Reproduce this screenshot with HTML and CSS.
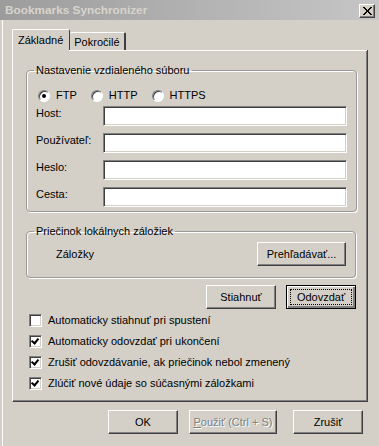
FILE: index.html
```html
<!DOCTYPE html>
<html lang="sk">
<head>
    <meta charset="UTF-8">
    <title>Bookmarks Synchronizer</title>
    <link rel="stylesheet" href="styles.css">
</head>
<body>
    <div class="window">
        <div class="titlebar">
            <span class="title">Bookmarks Synchronizer</span>
            <span class="close">
                <svg width="9" height="8" viewBox="0 0 9 8"><path d="M0 0h2v1h1v1h1v1h1v-1h1v-1h1v-1h2v1h-1v1h-1v1h-1v2h1v1h1v1h1v1h-2v-1h-1v-1h-1v-1h-1v1h-1v1h-1v1h-2v-1h1v-1h1v-1h1v-2h-1v-1h-1v-1h-1z" fill="#000"/></svg>
            </span>
        </div>
        <div class="content">
            <ul class="tabs">
                <li class="current">Základné</li>
                <li>Pokročilé</li>
            </ul>
            <div class="panel">
                <fieldset class="group remote">
                    <legend>Nastavenie vzdialeného súboru</legend>
                    <div class="radios">
                        <label><span class="radio checked"></span>FTP</label>
                        <label><span class="radio"></span>HTTP</label>
                        <label><span class="radio"></span>HTTPS</label>
                    </div>
                    <div class="row"><span class="lbl">Host:</span><span class="field"></span></div>
                    <div class="row"><span class="lbl">Používateľ:</span><span class="field"></span></div>
                    <div class="row"><span class="lbl">Heslo:</span><span class="field"></span></div>
                    <div class="row"><span class="lbl">Cesta:</span><span class="field"></span></div>
                </fieldset>
                <fieldset class="group local">
                    <legend>Priečinok lokálnych záložiek</legend>
                    <div class="local-row">
                        <span class="folder">Záložky</span>
                        <span class="btn browse">Prehľadávať...</span>
                    </div>
                </fieldset>
                <div class="actions">
                    <span class="btn">Stiahnuť</span>
                    <span class="btn focus"><span>Odovzdať</span></span>
                </div>
                <ul class="checks">
                    <li><span class="box"></span>Automaticky stiahnuť pri spustení</li>
                    <li><span class="box checked"></span>Automaticky odovzdať pri ukončení</li>
                    <li><span class="box checked"></span>Zrušiť odovzdávanie, ak priečinok nebol zmenený</li>
                    <li><span class="box checked"></span>Zlúčiť nové údaje so súčasnými záložkami</li>
                </ul>
            </div>
            <div class="footer">
                <span class="btn wide">OK</span>
                <span class="btn wide apply disabled"><span><u>P</u>oužiť (Ctrl + S)</span></span>
                <span class="btn wide">Zrušiť</span>
            </div>
        </div>
    </div>
</body>
</html>
```

FILE: styles.css
```css
body,ul,li,fieldset,legend{
    padding:0;
    margin:0;
}
body{
    font:11px/13px "Liberation Sans", Arial, sans-serif;
    color:#000;
    background-color:#d4d0c8;
}
ul{
    list-style:none;
}
.window{
    width:379px;
    height:446px;
    background-color:#d4d0c8;
    box-sizing:border-box;
    border-left:1px solid #d4d0c8;
    position:relative;
}
.window:before{
    content:"";
    position:absolute;
    left:1px;
    top:20px;
    bottom:0;
    border-left:1px solid #fff;
}
.titlebar{
    height:20px;
    margin-left:-1px;
    background:linear-gradient(to right,#9c9c9c,#c6c6c6);
    display:flex;
    align-items:center;
    justify-content:space-between;
    padding:0 4px 0 5px;
}
.title{
    font-weight:bold;
    font-size:11.8px;
    color:#d8d4cc;
}
.close{
    width:16px;
    height:14px;
    box-sizing:border-box;
    background-color:#d4d0c8;
    border-top:1px solid #fff;
    border-left:1px solid #fff;
    border-right:1px solid #404040;
    border-bottom:1px solid #404040;
    box-shadow:inset -1px -1px 0 #808080;
    display:flex;
    align-items:center;
    justify-content:center;
    margin-top:2px;
}
.content{
    padding:9px 0 0 11px;
}
.tabs{
    display:flex;
    align-items:flex-end;
    height:21px;
}
.tabs li{
    height:18px;
    line-height:18px;
    padding:0 4px 0 4px;
    border-top:1px solid #fff;
    border-left:1px solid #fff;
    border-right:2px solid #404040;
    border-radius:2px 2px 0 0;
    box-sizing:border-box;
}
.tabs li.current{
    height:21px;
    line-height:20px;
    padding:0 6px 0 5px;
    border-right:1px solid #404040;
}
.tabs li + li{
    border-left:none;
}
.panel{
    width:356px;
    height:352px;
    box-sizing:border-box;
    border-left:1px solid #fff;
    border-right:1px solid #404040;
    border-bottom:1px solid #404040;
    box-shadow:inset -1px -1px 0 #808080;
    padding:14px 0 0 13px;
    position:relative;
}
.panel:before{
    content:"";
    position:absolute;
    top:0;
    left:56px;
    right:0;
    border-top:1px solid #fff;
}
.group{
    width:330px;
    box-sizing:border-box;
    border:1px solid #9a9a9a;
    border-radius:4px;
    box-shadow:1px 1px 0 #fff, inset 1px 1px 0 #fff;
    padding:0 9px 0 9px;
}
.group legend{
    padding:0 2px;
    margin-left:-2px;
}
.radios{
    display:flex;
    margin:11px 0 3px 2px;
    height:15px;
    align-items:center;
}
.radios label{
    display:flex;
    align-items:center;
    margin-right:14px;
}
.radio{
    width:12px;
    height:12px;
    border-radius:50%;
    box-sizing:border-box;
    background-color:#fff;
    border:1px solid;
    border-color:#808080 #fff #fff #808080;
    box-shadow:inset 1px 1px 0 #404040;
    margin-right:6px;
    position:relative;
}
.radio.checked:after{
    content:"";
    position:absolute;
    left:3px;
    top:3px;
    width:4px;
    height:4px;
    border-radius:50%;
    background-color:#000;
}
.row{
    display:flex;
    align-items:flex-start;
    height:20px;
    margin-bottom:7px;
}
.lbl{
    width:67px;
    padding-top:1px;
}
.field{
    width:244px;
    height:20px;
    box-sizing:border-box;
    background-color:#fff;
    border:1px solid;
    border-color:#808080 #fff #fff #808080;
    box-shadow:inset 1px 1px 0 #404040, inset -1px -1px 0 #d4d0c8;
}
.remote{
    height:148px;
}
.local{
    margin-top:13px;
    height:53px;
}
.local-row{
    display:flex;
    justify-content:space-between;
    align-items:center;
    padding:4px 0 0 20px;
}
.btn{
    display:inline-flex;
    align-items:center;
    justify-content:center;
    height:24px;
    box-sizing:border-box;
    background-color:#d4d0c8;
    border:1px solid;
    border-color:#fff #404040 #404040 #fff;
    box-shadow:inset -1px -1px 0 #808080;
    padding:0 6px;
    white-space:nowrap;
}
.browse{
    width:89px;
}
.actions{
    display:flex;
    justify-content:flex-end;
    gap:10px;
    width:330px;
    margin-top:7px;
}
.actions .btn{
    width:70px;
}
.btn.focus{
    border-color:#000;
    box-shadow:inset 1px 1px 0 #fff, inset -2px -2px 0 #808080;
    padding:3px;
}
.btn.focus span{
    flex:1;
    align-self:stretch;
    display:flex;
    align-items:center;
    justify-content:center;
    border:1px dotted #000;
}
.checks{
    margin:1px 0 0 3px;
}
.checks li{
    display:flex;
    align-items:center;
    height:21px;
}
.box{
    width:13px;
    height:13px;
    box-sizing:border-box;
    background-color:#fff;
    border:1px solid;
    border-color:#808080 #fff #fff #808080;
    box-shadow:inset 1px 1px 0 #404040, inset -1px -1px 0 #d4d0c8;
    margin-right:6px;
    position:relative;
}
.box.checked:after{
    content:"";
    position:absolute;
    left:2px;
    top:1px;
    width:3px;
    height:5px;
    border-right:2px solid #000;
    border-bottom:2px solid #000;
    transform:rotate(40deg);
    transform-origin:60% 60%;
}
.footer{
    display:flex;
    justify-content:flex-end;
    gap:11px;
    padding:8px 6px 0 0;
    width:357px;
    box-sizing:border-box;
}
.btn.wide{
    width:70px;
    height:24px;
}
.btn.apply{
    width:88px;
    margin-right:5px;
    padding:0;
}
.btn.disabled{
    color:#808080;
    text-shadow:1px 1px 0 #fff;
}
```
